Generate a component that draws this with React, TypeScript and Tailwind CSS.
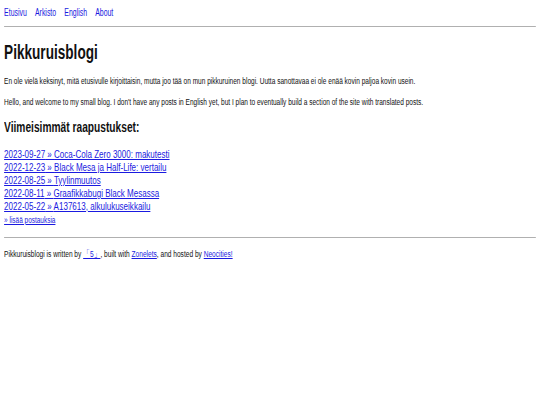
export default function App() {
  const posts = [
    ["2023-09-27", "Coca-Cola Zero 3000: makutesti"],
    ["2022-12-23", "Black Mesa ja Half-Life: vertailu"],
    ["2022-08-25", "Tyylinmuutos"],
    ["2022-08-11", "Graafikkabugi Black Mesassa"],
    ["2022-05-22", "A137613, alkulukuseikkailu"],
  ];
  return (
    <div className="bg-white w-[540px] h-[405px] overflow-hidden">
      <div
        className="w-[794px] origin-top-left scale-x-[0.68] px-[6px] pt-[7px] text-[#111]"
        style={{ fontFamily: '"Liberation Sans", Arial, sans-serif' }}
      >
        <nav className="flex gap-[12px] text-[10.2px] leading-[12px]">
          <a href="#" className="text-[#1a1ae0]">Etusivu</a>
          <a href="#" className="text-[#1a1ae0]">Arkisto</a>
          <a href="#" className="text-[#1a1ae0]">English</a>
          <a href="#" className="text-[#1a1ae0]">About</a>
        </nav>
        <hr className="mt-[7px] border-0 border-t border-[#b0b0b0]" />
        <h1 className="mt-[13px] text-[20px] leading-[24px] font-bold">Pikkuruisblogi</h1>
        <p className="mt-[11px] text-[9.6px] leading-[12px]">
          En ole vielä keksinyt, mitä etusivulle kirjoittaisin, mutta joo tää on mun pikkuruinen blogi. Uutta sanottavaa ei ole enää kovin paljoa kovin usein.
        </p>
        <p className="mt-[9px] text-[9.6px] leading-[12px]">
          Hello, and welcome to my small blog. I don't have any posts in English yet, but I plan to eventually build a section of the site with translated posts.
        </p>
        <h2 className="mt-[10px] text-[15px] leading-[18px] font-bold">Viimeisimmät raapustukset:</h2>
        <ul className="mt-[12px] text-[11.8px] leading-[13px]">
          {posts.map(([d, t]) => (
            <li key={d}>
              <a href="#" className="text-[#1a1ae0] underline">{d} » {t}</a>
            </li>
          ))}
        </ul>
        <a href="#" className="block mt-[1px] text-[9.5px] leading-[11px] text-[#1a1ae0] underline">» lisää postauksia</a>
        <hr className="mt-[12px] border-0 border-t border-[#b0b0b0]" />
        <p className="mt-[10px] text-[9.7px] leading-[11px]">
          Pikkuruisblogi is written by <a href="#" className="text-[#1a1ae0] underline">「5」</a>, built with <a href="#" className="text-[#1a1ae0] underline">Zonelets</a>, and hosted by <a href="#" className="text-[#1a1ae0] underline">Neocities!</a>
        </p>
      </div>
    </div>
  );
}
